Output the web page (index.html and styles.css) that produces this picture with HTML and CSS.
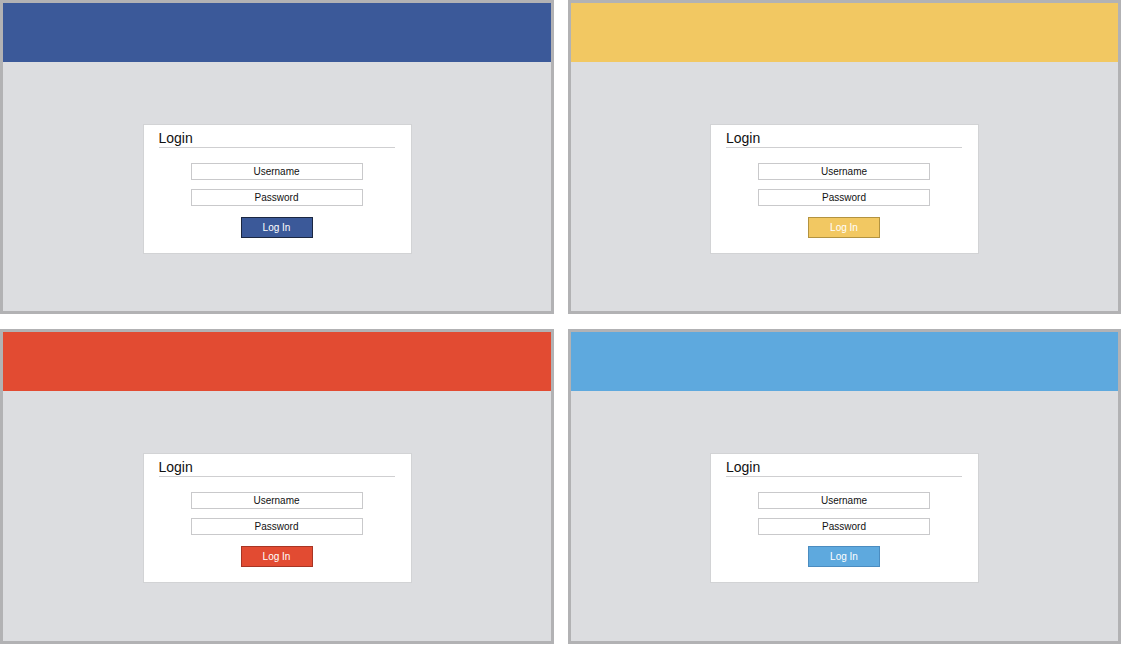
FILE: index.html
```html
<!DOCTYPE html>
<html>
<head>
<meta charset="utf-8">
<title>Login themes</title>
<link rel="stylesheet" href="styles.css">
</head>
<body>
<div class="grid">
  <div class="panel theme-blue">
    <div class="header"></div>
    <div class="body">
      <div class="login">
        <div class="title">Login</div>
        <div class="field">Username</div>
        <div class="field">Password</div>
        <div class="btn">Log In</div>
      </div>
    </div>
  </div>
  <div class="panel theme-yellow">
    <div class="header"></div>
    <div class="body">
      <div class="login">
        <div class="title">Login</div>
        <div class="field">Username</div>
        <div class="field">Password</div>
        <div class="btn">Log In</div>
      </div>
    </div>
  </div>
  <div class="panel theme-red">
    <div class="header"></div>
    <div class="body">
      <div class="login">
        <div class="title">Login</div>
        <div class="field">Username</div>
        <div class="field">Password</div>
        <div class="btn">Log In</div>
      </div>
    </div>
  </div>
  <div class="panel theme-sky">
    <div class="header"></div>
    <div class="body">
      <div class="login">
        <div class="title">Login</div>
        <div class="field">Username</div>
        <div class="field">Password</div>
        <div class="btn">Log In</div>
      </div>
    </div>
  </div>
</div>
</body>
</html>
```

FILE: styles.css
```css
html, body {
  margin: 0;
  padding: 0;
  background: #ffffff;
}
body {
  font-family: "Liberation Sans", Arial, sans-serif;
  width: 1122px;
  height: 645px;
  overflow: hidden;
}
.grid {
  display: grid;
  grid-template-columns: 554px 553px;
  grid-template-rows: 314px 315px;
  column-gap: 14px;
  row-gap: 15px;
}
.panel {
  box-sizing: border-box;
  border: 3px solid #b2b2b4;
  background: #dcdde0;
  display: flex;
  flex-direction: column;
}
.header {
  height: 59px;
  flex: none;
}
.body {
  flex: 1;
  display: flex;
  justify-content: center;
  align-items: flex-start;
  padding-top: 62px;
}
.login {
  box-sizing: border-box;
  width: 269px;
  height: 130px;
  background: #ffffff;
  border: 1px solid #d2d3d5;
  padding: 5px 16px 0 15px;
  display: flex;
  flex-direction: column;
  align-items: center;
}
.title {
  align-self: stretch;
  font-size: 14px;
  line-height: 17px;
  color: #111111;
  border-bottom: 1px solid #cfcfd1;
  margin-bottom: 15px;
}
.field {
  box-sizing: border-box;
  width: 172px;
  height: 17px;
  border: 1px solid #c9c9cb;
  font-size: 10px;
  line-height: 16px;
  text-align: center;
  color: #111111;
  margin-bottom: 9px;
}
.field + .field {
  margin-bottom: 11px;
}
.btn {
  box-sizing: border-box;
  width: 72px;
  height: 21px;
  font-size: 10px;
  line-height: 20px;
  text-align: center;
  color: #ffffff;
  border: 1px solid;
}
.theme-blue .header { background: #3b5999; }
.theme-blue .btn { background: #3b5999; border-color: #1b2741; }
.theme-yellow .header { background: #f2c862; }
.theme-yellow .btn { background: #f2c862; border-color: #b39340; }
.theme-red .header { background: #e24b32; }
.theme-red .btn { background: #e24b32; border-color: #a83524; }
.theme-sky .header { background: #5ea9de; }
.theme-sky .btn { background: #5ea9de; border-color: #4b8cc0; }
```
